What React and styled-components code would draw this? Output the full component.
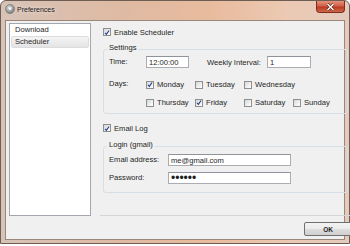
import React from 'react';
import styled, { createGlobalStyle } from 'styled-components';

const GlobalStyle = createGlobalStyle`
  html, body {
    margin: 0;
    padding: 0;
    background: #ffffff;
  }
  body {
    font-family: "Liberation Sans", Arial, sans-serif;
    color: #1e1e1e;
  }
`;

const Window = styled.div`
  box-sizing: border-box;
  width: 350px;
  height: 244px;
  display: flex;
  flex-direction: column;
  padding: 0 4px 3px 4px;
  border: 1px solid #6e5d53;
  border-radius: 6px 6px 0 0;
  background: linear-gradient(to right, #d7c3b7 0%, #dfbaa3 35%, #e8bb9d 60%, #ecc9b3 82%, #e4cbbd 100%);
`;

const TitleBar = styled.div`
  height: 19px;
  display: flex;
  align-items: flex-start;
`;

const AppIcon = styled.svg`
  width: 10px;
  height: 10px;
  margin-top: 3px;
  flex: none;
`;

const Title = styled.div`
  margin-left: 2px;
  font-size: 7px;
  line-height: 18px;
  color: #1a1a1a;
  text-shadow: 0 0 4px rgba(255, 255, 255, 0.9);
  flex: 1;
`;

const CloseButton = styled.div`
  width: 29px;
  height: 12px;
  display: flex;
  align-items: center;
  justify-content: center;
  box-sizing: border-box;
  border: 1px solid #7d2c1e;
  border-top: 0;
  border-radius: 0 0 4px 4px;
  background: linear-gradient(#e4927c 0%, #d2604a 45%, #bb3a22 55%, #d0674a 100%);
`;

const Client = styled.div`
  flex: 1;
  display: grid;
  grid-template-columns: 82px 1fr;
  grid-template-rows: 1fr auto;
  column-gap: 9px;
  padding: 2px 3px 3px 3px;
  border: 1px solid #9a877b;
  background: #f0f0f0;
  min-height: 0;
`;

const List = styled.ul`
  margin: 0;
  padding: 0 1px;
  list-style: none;
  background: #ffffff;
  border: 1px solid #a3a7ad;
`;

const ListItem = styled.li`
  height: 12px;
  line-height: 10px;
  padding-left: 3px;
  font-size: 7.6px;
  box-sizing: border-box;
  border: 1px solid ${p => (p.$selected ? '#dcdcdc' : 'transparent')};
  border-radius: 2px;
  background: ${p => (p.$selected ? 'linear-gradient(#f4f4f4, #e4e4e4)' : 'transparent')};
`;

const RightPanel = styled.div`
  display: flex;
  flex-direction: column;
  padding: 3px 4px 0 3px;
  border-bottom: 1px solid #d5d5d5;
`;

const CheckRow = styled.label`
  display: flex;
  align-items: center;
  gap: 3px;
  height: ${p => p.$h || 12}px;
  width: ${p => (p.$w ? `${p.$w}px` : 'auto')};
  margin-top: ${p => p.$mt || 0}px;
  font-size: 7.6px;
  white-space: nowrap;
`;

const Box = styled.span`
  width: 8px;
  height: 8px;
  box-sizing: border-box;
  flex: none;
  display: flex;
  align-items: center;
  justify-content: center;
  border: 1px solid #8e8f8f;
  background: linear-gradient(135deg, #d6d6d6 0%, #f0f0f0 60%, #ffffff 100%);
`;

const GroupBox = styled.fieldset`
  margin: ${p => p.$mt}px 0 0 0;
  padding: 0 5px ${p => p.$pb}px 5px;
  border: 1px solid #d5dfe5;
  border-radius: 3px;
  min-width: 0;
`;

const Legend = styled.legend`
  padding: 0 2px 4px;
  margin-left: -2px;
  font-size: 7.6px;
  line-height: 9px;
`;

const FormGrid = styled.div`
  display: grid;
  grid-template-columns: ${p => p.$label}px 1fr;
  align-items: center;
  row-gap: ${p => p.$gap}px;
  padding-top: ${p => p.$pt || 0}px;
`;

const Label = styled.span`
  font-size: 7.6px;
  line-height: 12px;
  align-self: ${p => (p.$top ? 'start' : 'center')};
  white-space: nowrap;
`;

const Inline = styled.div`
  display: flex;
  align-items: center;
`;

const TextInput = styled.input`
  box-sizing: border-box;
  width: ${p => p.$w}px;
  height: 12px;
  margin: 0;
  padding: 0 2px;
  border: 1px solid #abadb3;
  border-top-color: #8f949b;
  background: #ffffff;
  font-family: "Liberation Sans", Arial, sans-serif;
  font-size: ${p => (p.type === 'password' ? '12px' : '7.6px')};
  line-height: 10px;
  color: #1e1e1e;
  outline: none;
`;

const WeeklyLabel = styled.span`
  margin: 0 6px 0 18px;
  font-size: 7.6px;
  white-space: nowrap;
`;

const DayGrid = styled.div`
  display: flex;
  flex-direction: column;
  gap: 5px;
`;

const DayRow = styled.div`
  display: flex;
`;

const Footer = styled.div`
  grid-column: 1 / -1;
  display: flex;
  justify-content: flex-end;
  padding-top: 6px;
`;

const Button = styled.button`
  width: 48px;
  height: 14px;
  margin: 0;
  padding: 0;
  box-sizing: border-box;
  border: 1px solid #707070;
  border-radius: 2px;
  background: linear-gradient(#f3f3f3 0%, #ebebeb 48%, #dddddd 52%, #cfcfcf 100%);
  font-family: "Liberation Sans", Arial, sans-serif;
  font-size: 6.5px;
  font-weight: bold;
  color: #1e1e1e;
`;

const Check = ({ checked }) => (
  <Box>
    {checked && (
      <svg width="7" height="7" viewBox="0 0 7 7">
        <path d="M1.2 3.8 L2.8 5.6 L5.9 1.2" fill="none" stroke="#1f3f8f" strokeWidth="1.3" />
      </svg>
    )}
  </Box>
);

const CheckItem = ({ label, checked, ...rest }) => (
  <CheckRow {...rest}>
    <Check checked={checked} />
    {label}
  </CheckRow>
);

const dayRows = [
  [['Monday', true], ['Tuesday', false], ['Wednesday', false]],
  [['Thursday', false], ['Friday', true], ['Saturday', false], ['Sunday', false]],
];

export default function App() {
  return (
    <>
      <GlobalStyle />
      <Window>
        <TitleBar>
          <AppIcon viewBox="0 0 10 10">
            <defs>
              <radialGradient id="ic" cx="40%" cy="35%" r="70%">
                <stop offset="0%" stopColor="#d8d8d8" />
                <stop offset="100%" stopColor="#777777" />
              </radialGradient>
            </defs>
            <circle cx="5" cy="5" r="4.5" fill="url(#ic)" stroke="#6a6a6a" strokeWidth="0.6" />
            <path d="M3 3.6 L7 3.6 L5 6.6 Z" fill="#ffffff" />
          </AppIcon>
          <Title>Preferences</Title>
          <CloseButton>
            <svg width="9" height="8" viewBox="0 0 9 8">
              <path d="M1.5 1 L7.5 7 M7.5 1 L1.5 7" stroke="#5a2a22" strokeWidth="2.6" />
              <path d="M1.5 1 L7.5 7 M7.5 1 L1.5 7" stroke="#ffffff" strokeWidth="1.4" />
            </svg>
          </CloseButton>
        </TitleBar>
        <Client>
          <List>
            <ListItem>Download</ListItem>
            <ListItem $selected>Scheduler</ListItem>
          </List>
          <RightPanel>
            <CheckItem label="Enable Scheduler" checked />
            <GroupBox $mt={5} $pb={4}>
              <Legend>Settings</Legend>
              <FormGrid $label={37} $gap={10}>
                <Label>Time:</Label>
                <Inline>
                  <TextInput $w={43} defaultValue="12:00:00" />
                  <WeeklyLabel>Weekly Interval:</WeeklyLabel>
                  <TextInput $w={44} defaultValue="1" />
                </Inline>
                <Label $top>Days:</Label>
                <DayGrid>
                  {dayRows.map((row, i) => (
                    <DayRow key={i}>
                      {row.map(([day, on]) => (
                        <CheckItem key={day} label={day} checked={on} $w={49} $h={13} />
                      ))}
                    </DayRow>
                  ))}
                </DayGrid>
              </FormGrid>
            </GroupBox>
            <CheckItem label="Email Log" checked $mt={8} />
            <GroupBox $mt={6} $pb={8}>
              <Legend>Login (gmail)</Legend>
              <FormGrid $label={59} $gap={6} $pt={1}>
                <Label>Email address:</Label>
                <TextInput $w={123} defaultValue="me@gmail.com" />
                <Label>Password:</Label>
                <TextInput $w={123} type="password" defaultValue="secret" />
              </FormGrid>
            </GroupBox>
          </RightPanel>
          <Footer>
            <Button>OK</Button>
          </Footer>
        </Client>
      </Window>
    </>
  );
}
